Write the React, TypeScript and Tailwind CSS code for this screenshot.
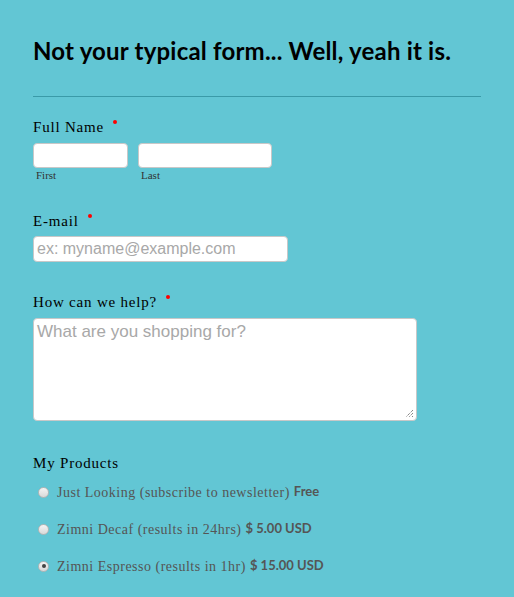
import React from 'react'

const slab = { fontFamily: '"Liberation Serif", serif' }
const sans = { fontFamily: 'Lato, "Open Sans", sans-serif' }
const field = { fontFamily: '"Liberation Sans", Arial, sans-serif' }

function Label({ text, required }: { text: string; required?: boolean }) {
  return (
    <div className="flex items-start text-[15px] leading-[20px] tracking-[0.8px] text-black" style={slab}>
      <span>{text}</span>
      {required && <span className="ml-[9px] mt-[3px] h-[4px] w-[4px] rounded-full bg-[#ff0000]" />}
    </div>
  )
}

const products = [
  { name: 'Just Looking (subscribe to newsletter)', price: 'Free', checked: false },
  { name: 'Zimni Decaf (results in 24hrs)', price: '$ 5.00 USD', checked: false },
  { name: 'Zimni Espresso (results in 1hr)', price: '$ 15.00 USD', checked: true },
]

export default function App() {
  return (
    <div className="min-h-[597px] w-[514px] bg-[#62c6d4] px-[33px] pt-[36px]">
      <h1 className="text-[24px] font-bold leading-[30px] tracking-[0.2px] text-black" style={sans}>
        Not your typical form... Well, yeah it is.
      </h1>
      <div className="mt-[30px] h-px w-[448px] bg-[#3a9aa8]" />

      <div className="mt-[20px]">
        <Label text="Full Name" required />
        <div className="mt-[6px] flex gap-[10px]">
          <div className="flex flex-col">
            <div className="h-[25px] w-[95px] rounded-[4px] border border-[#c8c8c8] bg-white" />
            <span className="ml-[3px] mt-[1px] text-[11px] leading-[13px] text-[#333]" style={slab}>First</span>
          </div>
          <div className="flex flex-col">
            <div className="h-[25px] w-[134px] rounded-[4px] border border-[#c8c8c8] bg-white" />
            <span className="ml-[3px] mt-[1px] text-[11px] leading-[13px] text-[#333]" style={slab}>Last</span>
          </div>
        </div>
      </div>

      <div className="mt-[29px]">
        <Label text="E-mail" required />
        <div
          className="mt-[5px] flex h-[26px] w-[255px] items-center rounded-[4px] border border-[#c8c8c8] bg-white px-[3px] text-[16px] text-[#a8a8a8]"
          style={field}
        >
          ex: myname@example.com
        </div>
      </div>

      <div className="mt-[30px]">
        <Label text="How can we help?" required />
        <div
          className="relative mt-[6px] h-[103px] w-[384px] rounded-[4px] border border-[#c8c8c8] bg-white px-[3px] pt-[2px] text-[17px] leading-[22px] text-[#a8a8a8]"
          style={field}
        >
          What are you shopping for?
          <svg className="absolute bottom-[2px] right-[2px]" width="9" height="9" viewBox="0 0 9 9">
            <path d="M8 1L1 8M8 4L4 8M8 7L7 8" stroke="#555" strokeWidth="1" strokeDasharray="1 1" />
          </svg>
        </div>
      </div>

      <div className="mt-[32px]">
        <Label text="My Products" />
        <div className="mt-[9px] flex flex-col gap-[17px] pl-[5px]">
          {products.map((p) => (
            <div key={p.name} className="flex h-[20px] items-center">
              <span className="flex h-[11px] w-[11px] items-center justify-center rounded-full border border-[#b5b5b5] bg-gradient-to-b from-[#f4f4f4] to-[#d9d9d9]">
                {p.checked && <span className="h-[4px] w-[4px] rounded-full bg-[#444]" />}
              </span>
              <span className="ml-[8px] text-[14px] tracking-[0.5px] text-[#555]" style={slab}>{p.name}</span>
              <span className="ml-[4px] text-[13px] font-bold text-[#555]" style={sans}>{p.price}</span>
            </div>
          ))}
        </div>
      </div>
    </div>
  )
}
